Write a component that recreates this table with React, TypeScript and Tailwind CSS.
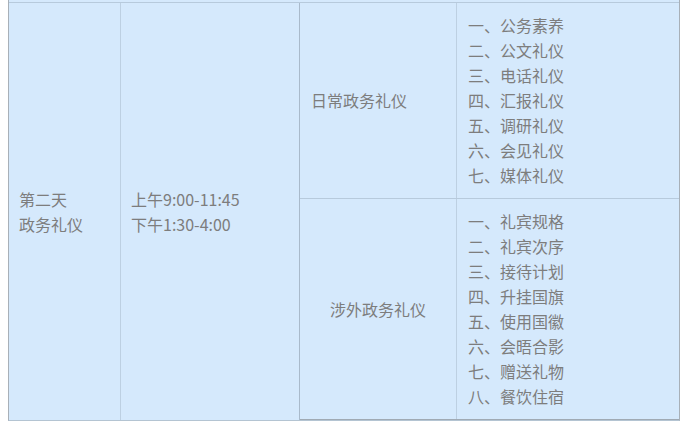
const daily = ['一、公务素养', '二、公文礼仪', '三、电话礼仪', '四、汇报礼仪', '五、调研礼仪', '六、会见礼仪', '七、媒体礼仪'];
const foreign = ['一、礼宾规格', '二、礼宾次序', '三、接待计划', '四、升挂国旗', '五、使用国徽', '六、会晤合影', '七、赠送礼物', '八、餐饮住宿'];

const List = ({items}: {items: string[]}) => (
    <div className="flex flex-col px-[11px]">
        {items.map((t) => <span key={t}>{t}</span>)}
    </div>
);

export default function App() {
    return (
        <div className="bg-white h-[428px] pl-2 text-[16px] leading-[25px] text-[#7d7d7d]" style={{fontFamily: '"Noto Sans CJK SC", "Noto Sans", sans-serif'}}>
            <div className="w-[672px] bg-[#d5e9fc] border-l border-r border-b border-l-[#a8b0b8] border-r-[#a8b0b8] border-b-[#b4c4d2]">
                <div className="h-[3px] border-b border-[#b7cadc]" />
                <div className="flex h-[417px]">
                    <div className="w-[112px] border-r border-[#bdd0e2] flex flex-col justify-center px-[10px]">
                        <span>第二天</span>
                        <span>政务礼仪</span>
                    </div>
                    <div className="w-[179px] border-r border-[#a9bacb] flex flex-col justify-center px-[10px]">
                        <span>上午9:00-11:45</span>
                        <span>下午1:30-4:00</span>
                    </div>
                    <div className="flex-1 flex flex-col">
                        <div className="flex h-[196px] border-b border-[#b7cadc]">
                            <div className="w-[157px] border-r border-[#bdd0e2] flex items-center px-[11px]">日常政务礼仪</div>
                            <div className="flex-1 flex items-center">
                                <List items={daily}/>
                            </div>
                        </div>
                        <div className="flex flex-1 border-b border-[#a0aab4]">
                            <div className="w-[157px] border-r border-[#bdd0e2] flex items-center justify-center">涉外政务礼仪</div>
                            <div className="flex-1 flex items-center">
                                <List items={foreign}/>
                            </div>
                        </div>
                    </div>
                </div>
            </div>
        </div>
    );
}
